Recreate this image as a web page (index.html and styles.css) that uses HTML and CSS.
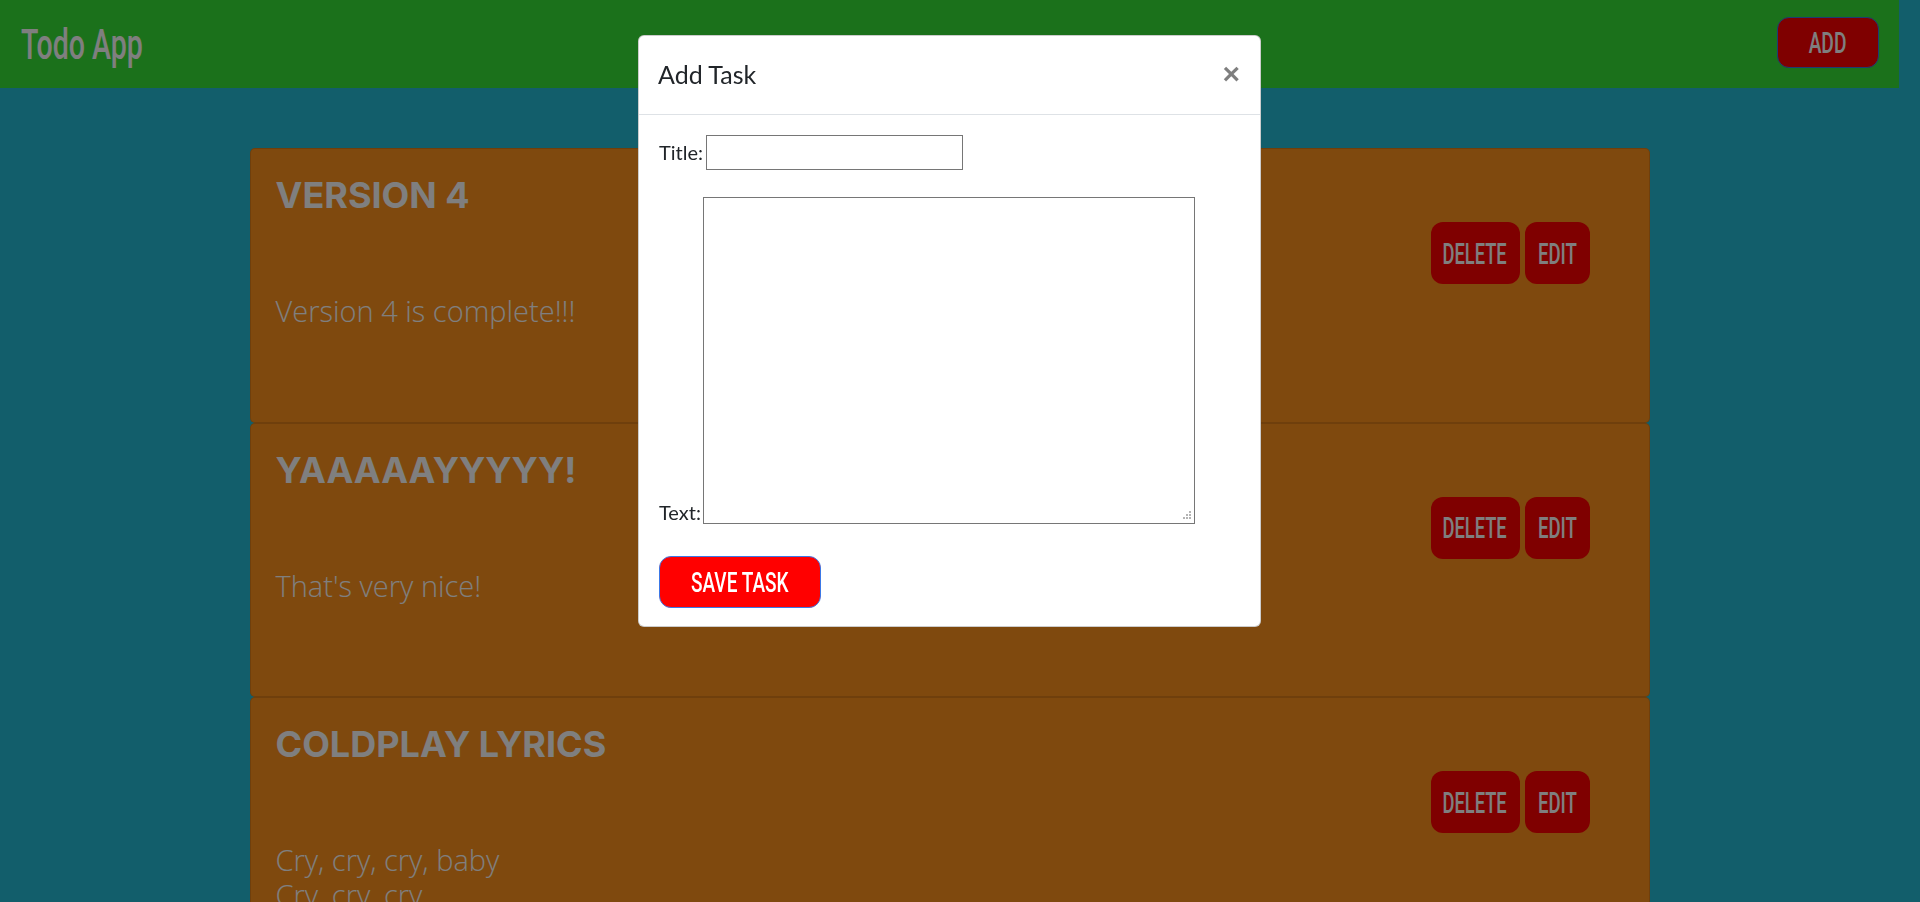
FILE: index.html
```html
<!DOCTYPE html>
<html lang="en">
<head>
<meta charset="utf-8">
<title>Todo App</title>
<link rel="stylesheet" href="styles.css">
</head>
<body class="modal-open">
  <nav class="navbar">
    <span class="brand"><span class="sq sq-left">Todo App</span></span>
    <button class="btn-add" type="button"><span class="sq sq-add">ADD</span></button>
  </nav>

  <main class="tasks">
    <div class="card">
      <div class="card-main">
        <h2 class="card-title">VERSION 4</h2>
        <p class="card-text">Version 4 is complete!!!</p>
      </div>
      <div class="card-actions">
        <button class="btn-act btn-del" type="button"><span class="sq sq-del">DELETE</span></button>
        <button class="btn-act btn-edit" type="button"><span class="sq sq-edit">EDIT</span></button>
      </div>
    </div>
    <div class="card">
      <div class="card-main">
        <h2 class="card-title">YAAAAAYYYYY!</h2>
        <p class="card-text">That's very nice!</p>
      </div>
      <div class="card-actions">
        <button class="btn-act btn-del" type="button"><span class="sq sq-del">DELETE</span></button>
        <button class="btn-act btn-edit" type="button"><span class="sq sq-edit">EDIT</span></button>
      </div>
    </div>
    <div class="card">
      <div class="card-main">
        <h2 class="card-title">COLDPLAY LYRICS</h2>
        <p class="card-text">Cry, cry, cry, baby<br>Cry, cry, cry</p>
      </div>
      <div class="card-actions">
        <button class="btn-act btn-del" type="button"><span class="sq sq-del">DELETE</span></button>
        <button class="btn-act btn-edit" type="button"><span class="sq sq-edit">EDIT</span></button>
      </div>
    </div>
  </main>

  <div class="backdrop"></div>

  <div class="modal">
    <div class="modal-dialog">
      <div class="modal-content">
        <div class="modal-header">
          <h5 class="modal-title">Add Task</h5>
          <button class="close" type="button">&times;</button>
        </div>
        <div class="modal-body">
          <div class="field">
            <label class="field-label" for="title">Title:</label>
            <input class="field-input" id="title" type="text">
          </div>
          <div class="field field-text">
            <label class="field-label" for="text">Text:</label>
            <textarea class="field-area" id="text"></textarea>
          </div>
          <button class="btn-save" type="button"><span class="sq">SAVE TASK</span></button>
        </div>
      </div>
    </div>
  </div>
</body>
</html>
```

FILE: styles.css
```css
html, body {
  margin: 0;
  height: 100%;
}

body {
  background: #24bcd6;
  padding-right: 21px;
  overflow: hidden;
  font-family: "Lato", "Noto Sans", sans-serif;
  color: #212529;
}

/* condensed display text */
.sq {
  display: inline-block;
  white-space: nowrap;
  transform: scaleX(0.68);
  transform-origin: center center;
}
.sq-left { transform-origin: left center; }

/* Navbar */
.navbar {
  height: 88px;
  box-sizing: border-box;
  background: #36e236;
  display: flex;
  align-items: flex-start;
  justify-content: space-between;
  padding: 0 20px;
}

.brand {
  font-family: "Roboto", sans-serif;
  font-weight: 500;
  font-size: 42px;
  line-height: 42px;
  color: #fff;
  margin-top: 24px;
  margin-left: 1px;
}

.btn-add {
  margin-top: 17px;
  width: 102px;
  height: 51px;
  padding: 0;
  background: #ff0000;
  border: 1px solid #3b78e6;
  border-radius: 12px;
  color: #fff;
  font-family: "Roboto", sans-serif;
  font-weight: 500;
  font-size: 30px;
  line-height: 1;
  display: flex;
  align-items: center;
  justify-content: center;
}
.sq-add { transform: scaleX(0.64); }

/* Task cards */
.tasks {
  width: 1400px;
  margin: 60px auto 0;
}

.card {
  height: 274.5px;
  box-sizing: border-box;
  background: #ff921c;
  border: 1px solid rgba(0, 0, 0, 0.125);
  border-radius: 5px;
  display: flex;
  padding: 25px 0 0 25px;
  overflow: hidden;
}

.card-main {
  flex: 1;
  color: #fff;
}

.card-title {
  margin: 0 0 77px;
  font-family: "Inter", sans-serif;
  font-weight: 700;
  font-size: 36px;
  line-height: 1.2;
}

.card-text {
  margin: 0;
  font-family: "Open Sans", sans-serif;
  font-weight: 300;
  font-size: 29px;
  line-height: 34.5px;
}

.card-actions {
  display: flex;
  gap: 5px;
  align-self: flex-start;
  margin: 48px 59px 0 0;
}

.btn-act {
  height: 62px;
  padding: 1px 0 0;
  border: none;
  border-radius: 12px;
  background: #ff0000;
  color: #fff;
  font-family: "Roboto", sans-serif;
  font-weight: 500;
  font-size: 30px;
  line-height: 1;
  display: flex;
  align-items: center;
  justify-content: center;
}
.btn-del { width: 89px; }
.btn-edit { width: 65px; }
.sq-del { transform: scaleX(0.61); }
.sq-edit { transform: scaleX(0.62); }

/* Backdrop */
.backdrop {
  position: fixed;
  inset: 0;
  background: rgba(0, 0, 0, 0.5);
  z-index: 10;
}

/* Modal */
.modal {
  position: fixed;
  top: 0;
  left: 0;
  right: 21px;
  bottom: 0;
  z-index: 20;
}

.modal-dialog {
  width: 623px;
  margin: 35px auto 0;
}

.modal-content {
  background: #fff;
  border: 1px solid rgba(0, 0, 0, 0.2);
  border-radius: 6px;
}

.modal-header {
  display: flex;
  align-items: flex-start;
  justify-content: space-between;
  padding: 20px 20px 20px 19px;
  border-bottom: 1px solid #dee2e6;
}

.modal-title {
  margin: 0;
  font-family: "Lato", sans-serif;
  font-weight: 400;
  font-size: 25px;
  line-height: 37.5px;
  color: #212529;
}

.close {
  margin: -20px -20px -20px auto;
  padding: 23px 20px 17px;
  background: transparent;
  border: 0;
  font-family: "Liberation Sans", sans-serif;
  font-weight: 700;
  font-size: 30px;
  line-height: 1;
  color: #000;
  opacity: 0.5;
}

.modal-body {
  padding: 20px 20px 18px;
}

.field {
  display: flex;
  align-items: center;
  gap: 3px;
}

.field-label {
  font-size: 20px;
  line-height: 30px;
  color: #212529;
}

.field-input {
  width: 257px;
  height: 35px;
  box-sizing: border-box;
  margin: 0;
  border: 1px solid #767676;
  border-radius: 0;
  padding: 1px 3px;
}

.field-text {
  margin-top: 27px;
  align-items: flex-end;
  gap: 2px;
}
.field-text .field-label {
  margin-bottom: -3px;
}

.field-area {
  width: 492px;
  height: 327px;
  box-sizing: border-box;
  margin: 0;
  border: 1px solid #767676;
  border-radius: 0;
}

.field-area::-webkit-resizer {
  background:
    linear-gradient(#b4b4b4, #b4b4b4) 10px 3px / 2px 2px no-repeat,
    linear-gradient(#b4b4b4, #b4b4b4) 7px 6px / 2px 2px no-repeat,
    linear-gradient(#b4b4b4, #b4b4b4) 10px 6px / 2px 2px no-repeat,
    linear-gradient(#b4b4b4, #b4b4b4) 4px 9px / 2px 2px no-repeat,
    linear-gradient(#b4b4b4, #b4b4b4) 7px 9px / 2px 2px no-repeat,
    linear-gradient(#b4b4b4, #b4b4b4) 10px 9px / 2px 2px no-repeat,
    #fff;
}

.btn-save {
  margin-top: 32px;
  width: 162px;
  height: 52px;
  padding: 3px 0 0;
  background: #ff0000;
  border: 1px solid #3b78e6;
  border-radius: 12px;
  color: #fff;
  font-family: "Roboto", sans-serif;
  font-weight: 500;
  font-size: 28px;
  line-height: 1;
  display: flex;
  align-items: center;
  justify-content: center;
}
```
